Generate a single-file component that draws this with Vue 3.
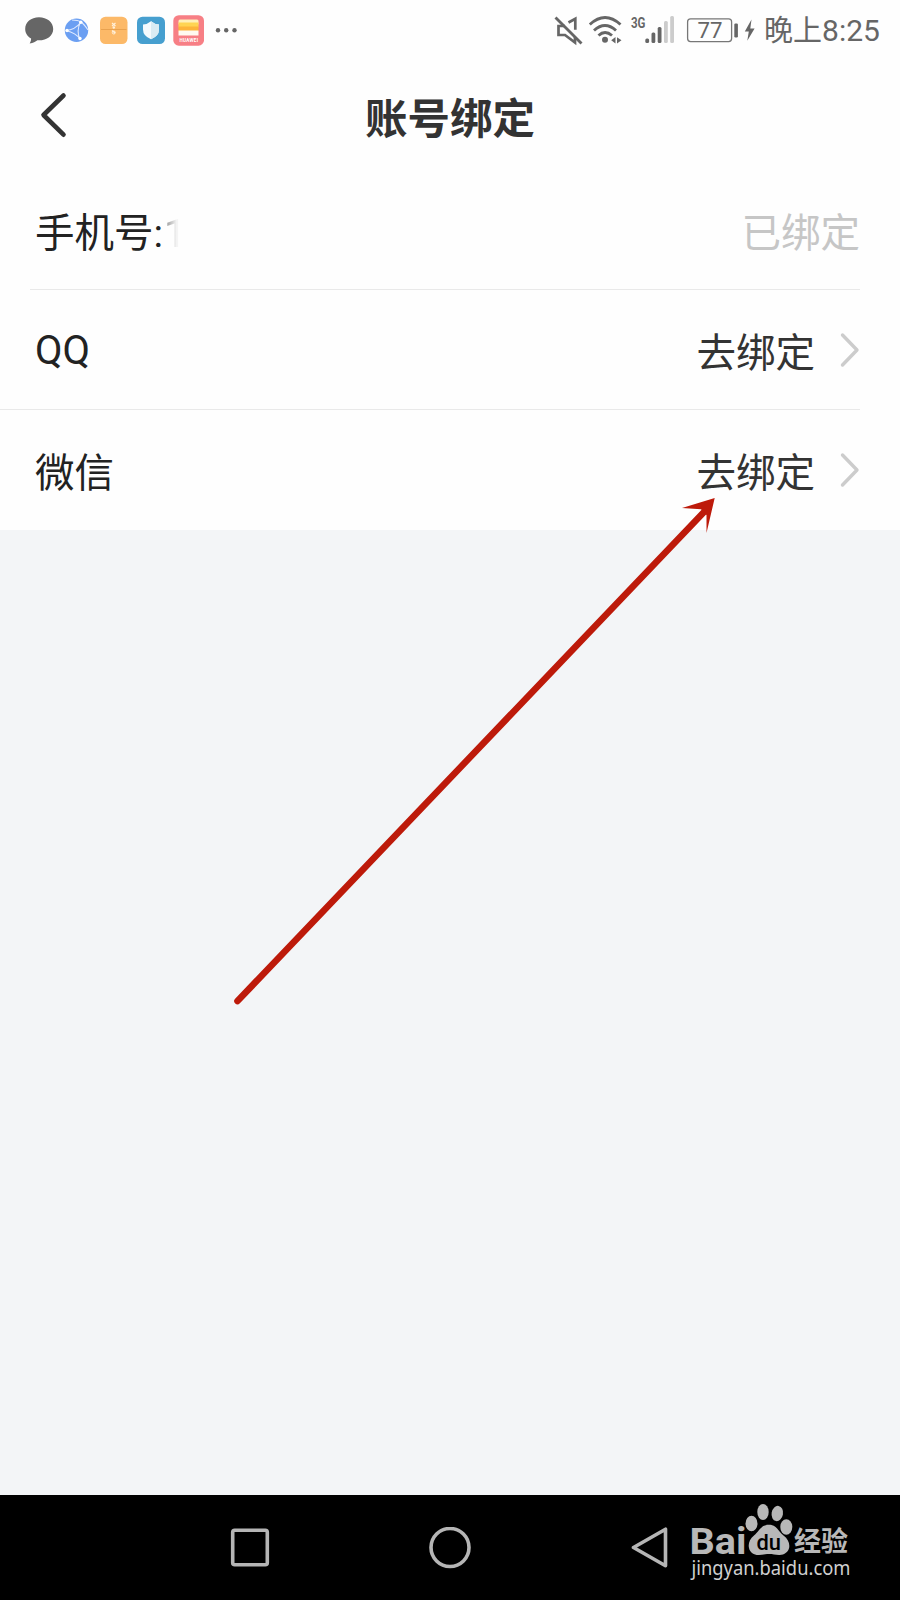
<template>
  <div class="page">
    <div class="status">
      <div class="status-left">
        <svg class="notices" viewBox="0 0 240 60">
          <!-- message -->
          <path d="M39 17.3C31 17.3 25.2 22.3 25.2 29c0 4.200 2.300 7.600 5.900 9.600 0 2-.6 3.500-1.400 4.900 3.500-.4 5.800-1.600 7.700-3.200 9 .6 15.800-4.300 15.800-11.300 0-6.700-6.200-11.700-14.200-11.700z" fill="#666"/>
          <!-- browser -->
          <circle cx="76.500" cy="30.300" r="11.700" fill="#6b9ff2"/>
          <path d="M66 30.500Q75 30 81 22M66 30.500Q76 33 80 39M80.500 22Q76 31 80 39.500M72 20Q78 20 81 22T88 30" fill="none" stroke="#dfeaff" stroke-width="1.100"/>
          <circle cx="80.800" cy="22.300" r="1.700" fill="#fff"/>
          <circle cx="67" cy="30.500" r="1.700" fill="#fff"/>
          <circle cx="80" cy="38.500" r="1.700" fill="#fff"/>
          <!-- archive -->
          <rect x="100" y="16.700" width="27.500" height="27.300" rx="5.500" fill="#fcb968"/>
          <path d="M101 29.500h25.500" stroke="#e9a24f" stroke-width="1"/>
          <path d="M112 23l3.500 3M115.500 23l-3.500 3M112 30.500l3 2.500" stroke="#fff0da" stroke-width="1.200"/>
          <circle cx="113.800" cy="27.500" r="1.200" fill="#fff0da"/>
          <circle cx="113.800" cy="32.500" r="1.500" fill="none" stroke="#fff0da"/>
          <!-- security -->
          <rect x="137" y="16.700" width="28" height="27.300" rx="5.500" fill="#469fcf"/>
          <path d="M151 21.300q3.500 3 8 3.200v5q0 6.500-8 9.800-8-3.300-8-9.800v-5q4.500-.2 8-3.200z" fill="#f4fafd"/>
          <path d="M151 21.300q3.500 3 8 3.200v5q0 6.500-8 9.800z" fill="#d9ebf3"/>
          <!-- wallet -->
          <rect x="173.300" y="15.200" width="30.700" height="30.500" rx="5.500" fill="#f77f85"/>
          <rect x="178.500" y="19.500" width="20" height="5.500" rx="1.500" fill="#fff0b8"/>
          <rect x="178.500" y="22.500" width="20" height="5" fill="#ffd452"/>
          <rect x="178.500" y="26.500" width="20" height="5" fill="#fdb43a"/>
          <rect x="178.500" y="30.500" width="20" height="5" fill="#fffaf0"/>
          <text x="179.500" y="42.300" font-size="4.600" font-weight="700" textLength="18.500" fill="#fff">HUAWEI</text>
          <circle cx="218" cy="30.200" r="2.200" fill="#666"/>
          <circle cx="226.200" cy="30.200" r="2.200" fill="#666"/>
          <circle cx="234.500" cy="30.200" r="2.200" fill="#666"/>
        </svg>
      </div>
      <div class="status-right">
        <svg class="signals" viewBox="550 0 210 60">
          <g fill="none" stroke="#666" stroke-width="2.700">
            <path d="M555.500 17.500L581.500 43.500" stroke-width="2.800"/>
            <path d="M565 26h-6.500v9h6.500l10 7.500V37M568.500 22.500l6.800-3.800v11"/>
            <path d="M589.800 24.500Q605 10.500 620.500 24.500M594 30.500Q605 20.500 616 30.500M598.500 35.500Q605 29.500 612 35.500" stroke-width="2.900"/>
          </g>
          <circle cx="605" cy="39.800" r="3" fill="#666"/>
          <path d="M615.500 37v6.500l-4.300-3.200zM617 37.200l4.500 3-4.500 3.300z" fill="#666"/>
          <text x="631" y="27.600" font-size="15.500" font-weight="700" textLength="14.500" lengthAdjust="spacingAndGlyphs" fill="#666">3G</text>
          <g fill="#666">
            <rect x="645.300" y="38.500" width="3.800" height="4.500" rx="1.500"/>
            <rect x="651.500" y="32.500" width="3.800" height="10.500" rx="1.500"/>
            <rect x="657.700" y="27" width="3.800" height="16" rx="1.500"/>
          </g>
          <rect x="664" y="21" width="3.800" height="22" rx="1.500" fill="#ccc"/>
          <rect x="670.200" y="16" width="3.800" height="27" rx="1.500" fill="#ccc"/>
          <rect x="687.600" y="18.800" width="44" height="22.800" rx="3" fill="none" stroke="#777" stroke-width="1.300"/>
          <rect x="734.300" y="23.500" width="3.600" height="14" rx="1.200" fill="#666"/>
          <text x="697.500" y="38" font-size="22.500" textLength="25" lengthAdjust="spacingAndGlyphs" fill="#666">77</text>
          <path d="M751.500 19.500L744.800 31.500h4l-1.500 9.300 7.300-12.300h-4.300z" fill="#666"/>
        </svg>
        <span class="time"><span class="period">晚上</span>8:25</span>
      </div>
    </div>

    <header class="header">
      <svg class="back" viewBox="0 0 30 50">
        <path d="M24.500 5.500L4.500 25 24.500 44.700" fill="none" stroke="#333" stroke-width="4.600" stroke-linecap="round" stroke-linejoin="round"/>
      </svg>
      <h1 class="title">账号绑定</h1>
    </header>

    <main class="list">
      <div v-for="item in accounts" :key="item.name" class="row" :class="{ inset: item.bound }">
        <span class="name" :class="{ latin: item.latin }">{{ item.name }}<span v-if="item.bound" class="number">1</span></span>
        <span class="state" :class="{ bound: item.bound }">{{ item.bound ? '已绑定' : '去绑定' }}</span>
        <svg v-if="!item.bound" class="chevron" viewBox="0 0 20 36">
          <path d="M2.500 3L17 18 2.500 33" fill="none" stroke="#ccc" stroke-width="3.400" stroke-linecap="round" stroke-linejoin="round"/>
        </svg>
      </div>
    </main>

    <nav class="nav">
      <svg viewBox="0 0 42 42">
        <rect x="3.700" y="3.200" width="34.600" height="34.600" rx="2" />
      </svg>
      <svg viewBox="0 0 42 42">
        <circle cx="21" cy="20.500" r="19" />
      </svg>
      <svg viewBox="0 0 42 42">
        <path d="M36.500 2.200v36.600L4.500 20.500z" />
      </svg>
    </nav>

    <svg class="arrow" viewBox="0 0 500 530">
      <path d="M7.500 511L474 22" stroke="#bd1a0a" stroke-width="6.600" stroke-linecap="round"/>
      <path d="M484.700 8L452 18 471 19.300 476.500 25 476.500 43z" fill="#bd1a0a"/>
    </svg>

    <svg class="watermark" viewBox="685 1500 170 85">
      <g fill="#b8b8b8">
        <text x="689.500" y="1553.500" font-size="36" font-weight="700" textLength="57" lengthAdjust="spacingAndGlyphs">Bai</text>
        <ellipse cx="751.500" cy="1523.500" rx="6" ry="7.700"/>
        <ellipse cx="763" cy="1512" rx="5.700" ry="8"/>
        <ellipse cx="777.300" cy="1513.500" rx="5.700" ry="7.700" transform="rotate(10 777.300 1513.500)"/>
        <ellipse cx="786.300" cy="1527" rx="6" ry="7.700"/>
        <path d="M768.700 1524.700C761 1524.700 759.500 1531 754 1535.500C749.500 1539 748 1544 749 1548C750 1553 754.500 1555.300 759 1555C763 1554.700 765 1554 769 1554S775 1554.700 779 1555C784 1555.300 788.500 1552 789.200 1547.500C789.800 1543 788 1539 783.500 1535.500C778 1531 777 1524.700 768.700 1524.700z"/>
        <text class="cn" x="794" y="1551.300" font-size="27" font-weight="700" textLength="54" lengthAdjust="spacingAndGlyphs">经验</text>
      </g>
      <text x="756.500" y="1549.500" font-size="22" font-weight="500" textLength="24.500" lengthAdjust="spacingAndGlyphs" fill="#000">du</text>
      <text class="url" x="691.500" y="1575" font-size="19" textLength="159" lengthAdjust="spacingAndGlyphs" fill="#d0d0d0">jingyan.baidu.com</text>
    </svg>
  </div>
</template>

<script setup>
const accounts = [
  { name: '手机号:', bound: true },
  { name: 'QQ', bound: false, latin: true },
  { name: '微信', bound: false }
]
</script>

<style>
body {
  margin: 0;
}
</style>

<style scoped>
.page {
  position: relative;
  display: flex;
  flex-direction: column;
  width: 900px;
  height: 1600px;
  overflow: hidden;
  background: #f3f5f7;
  font-family: Roboto, "Noto Sans CJK SC", sans-serif;
}
.status {
  display: flex;
  justify-content: space-between;
  height: 60px;
  background: #fefefe;
}
.notices {
  display: block;
  width: 240px;
  height: 60px;
}
.status-right {
  display: flex;
  width: 350px;
}
.signals {
  flex: none;
  width: 210px;
  height: 60px;
}
.time {
  margin-left: 4px;
  font-size: 30px;
  line-height: 62px;
  color: #666;
  white-space: nowrap;
}
.period {
  font-size: 29px;
}
.header {
  display: grid;
  grid-template-columns: 100px 1fr 100px;
  align-items: center;
  height: 110px;
  background: #fefefe;
}
.back {
  width: 30px;
  height: 50px;
  margin-left: 39px;
}
.title {
  margin: 10px 0 0;
  font-size: 42.500px;
  font-weight: 700;
  line-height: 60px;
  text-align: center;
  color: #333;
}
.list {
  background: #fefefe;
}
.row {
  box-sizing: border-box;
  display: flex;
  align-items: center;
  width: 860px;
  height: 120px;
  padding-left: 35px;
  border-bottom: 1px solid #e9e9e9;
}
.row.inset {
  width: 830px;
  margin-left: 30px;
  padding-left: 5px;
}
.row:last-child {
  border-bottom: none;
}
.name {
  flex: 1;
  padding-top: 8px;
  font-size: 39.500px;
  line-height: 60px;
  color: #222;
}
.name.latin {
  padding-top: 3px;
  font-size: 40px;
}
.number {
  display: inline-block;
  width: 18px;
  margin-left: 1px;
  color: transparent;
  background: linear-gradient(90deg, #888, #f4f4f4 70%);
  background-clip: text;
}
.state {
  padding-top: 8px;
  font-size: 39.500px;
  line-height: 60px;
  color: #333;
}
.state.bound {
  color: #c6c6c6;
}
.chevron {
  width: 20px;
  height: 36px;
  margin-left: 25px;
}
.nav {
  display: flex;
  justify-content: center;
  align-items: center;
  gap: 158px;
  height: 105px;
  margin-top: auto;
  background: #000;
}
.nav svg {
  width: 42px;
  height: 42px;
  fill: none;
  stroke: #b5b5b5;
  stroke-width: 3.600;
  stroke-linejoin: round;
}
.arrow {
  position: absolute;
  left: 230px;
  top: 490px;
  width: 500px;
  height: 530px;
}
.watermark {
  position: absolute;
  left: 685px;
  top: 1500px;
  width: 170px;
  height: 85px;
}
.watermark .cn {
  font-family: "Noto Sans CJK SC", sans-serif;
}
.watermark .url {
  font-family: "Noto Sans", "Open Sans", sans-serif;
}
</style>
